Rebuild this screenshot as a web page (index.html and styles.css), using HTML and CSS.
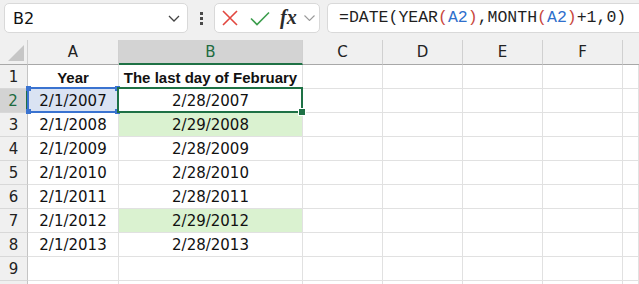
FILE: index.html
```html
<!DOCTYPE html>
<html lang="en">
<head>
    <meta charset="UTF-8">
    <title>Last day of February</title>
    <link rel="stylesheet" href="styles.css">
</head>
<body>
    <div class="toolbar">
        <div class="name-box">
            <span>B2</span>
            <svg class="chev" width="12" height="7" viewBox="0 0 12 7"><path d="M1 1l5 5 5-5" fill="none" stroke="#444" stroke-width="1.3"/></svg>
        </div>
        <div class="dots"><i></i><i></i><i></i></div>
        <div class="fx-box">
            <svg width="16" height="16" viewBox="0 0 16 16"><path d="M1 1l14 14M15 1L1 15" stroke="#e2473f" stroke-width="1.6"/></svg>
            <svg width="20" height="15" viewBox="0 0 20 15"><path d="M1 7.5l6 6L19 1.5" fill="none" stroke="#3d9e4e" stroke-width="1.6"/></svg>
            <span class="fx">fx</span>
            <svg width="11" height="6" viewBox="0 0 11 6"><path d="M0.5 0.5l5 5 5-5" fill="none" stroke="#9a9a9a" stroke-width="1.1"/></svg>
        </div>
        <div class="formula">=DATE(YEAR<span class="p">(</span><span class="r">A2</span><span class="p">)</span>,MONTH<span class="p">(</span><span class="r">A2</span><span class="p">)</span>+1,0)</div>
    </div>

    <div class="sheet">
        <div class="hd corner"><span class="tri"></span></div>
        <div class="hd col">A</div>
        <div class="hd col on">B</div>
        <div class="hd col">C</div>
        <div class="hd col">D</div>
        <div class="hd col">E</div>
        <div class="hd col">F</div>
        <div class="hd col last"></div>

        <div class="hd row">1</div>
        <div class="c bold">Year</div>
        <div class="c bold">The last day of February</div>
        <div class="c"></div><div class="c"></div><div class="c"></div><div class="c"></div><div class="c"></div>

        <div class="hd row on">2</div>
        <div class="c ref">2/1/2007
            <span class="range"><b class="k1"></b><b class="k2"></b><b class="k3"></b><b class="k4"></b></span>
        </div>
        <div class="c active">2/28/2007<span class="sel"><b class="handle"></b></span></div>
        <div class="c"></div><div class="c"></div><div class="c"></div><div class="c"></div><div class="c"></div>

        <div class="hd row">3</div>
        <div class="c">2/1/2008</div>
        <div class="c leap">2/29/2008</div>
        <div class="c"></div><div class="c"></div><div class="c"></div><div class="c"></div><div class="c"></div>

        <div class="hd row">4</div>
        <div class="c">2/1/2009</div>
        <div class="c">2/28/2009</div>
        <div class="c"></div><div class="c"></div><div class="c"></div><div class="c"></div><div class="c"></div>

        <div class="hd row">5</div>
        <div class="c">2/1/2010</div>
        <div class="c">2/28/2010</div>
        <div class="c"></div><div class="c"></div><div class="c"></div><div class="c"></div><div class="c"></div>

        <div class="hd row">6</div>
        <div class="c">2/1/2011</div>
        <div class="c">2/28/2011</div>
        <div class="c"></div><div class="c"></div><div class="c"></div><div class="c"></div><div class="c"></div>

        <div class="hd row">7</div>
        <div class="c">2/1/2012</div>
        <div class="c leap">2/29/2012</div>
        <div class="c"></div><div class="c"></div><div class="c"></div><div class="c"></div><div class="c"></div>

        <div class="hd row">8</div>
        <div class="c">2/1/2013</div>
        <div class="c">2/28/2013</div>
        <div class="c"></div><div class="c"></div><div class="c"></div><div class="c"></div><div class="c"></div>

        <div class="hd row">9</div>
        <div class="c"></div><div class="c"></div>
        <div class="c"></div><div class="c"></div><div class="c"></div><div class="c"></div><div class="c"></div>

        <div class="hd row"></div>
        <div class="c"></div><div class="c"></div>
        <div class="c"></div><div class="c"></div><div class="c"></div><div class="c"></div><div class="c"></div>
    </div>
</body>
</html>
```

FILE: styles.css
```css
body {
    margin: 0px;
    padding: 0px;
    width: 639px;
    height: 284px;
    overflow: hidden;
    background-color: #f0f0f0;
    font-family: "DejaVu Sans", sans-serif;
    color: #1f1f1f;
}
.toolbar {
    height: 40px;
    box-sizing: border-box;
    padding: 3px 0px 0px 4px;
    display: flex;
    align-items: flex-start;
}
.name-box {
    width: 184px;
    height: 30px;
    box-sizing: border-box;
    background-color: #ffffff;
    border: 1px solid #d9d9d9;
    border-radius: 5px;
    display: flex;
    align-items: center;
    justify-content: space-between;
    padding: 0px 7px 0px 8px;
    font-size: 16px;
    color: #111;
}
.dots {
    width: 26px;
    height: 30px;
    display: flex;
    flex-direction: column;
    align-items: center;
    justify-content: center;
    gap: 2px;
}
.dots i {
    display: block;
    width: 3px;
    height: 3px;
    background-color: #4a4a4a;
}
.fx-box {
    width: 106px;
    height: 30px;
    box-sizing: border-box;
    background-color: #ffffff;
    border: 1px solid #d9d9d9;
    border-radius: 5px;
    display: flex;
    align-items: center;
    padding-left: 7px;
}
.fx-box svg:nth-child(1) {
    margin-right: 12px;
}
.fx-box svg:nth-child(2) {
    margin-right: 10px;
}
.fx {
    font-family: "Liberation Serif", serif;
    font-style: italic;
    font-weight: 700;
    font-size: 20px;
    color: #2b2b2b;
    margin-right: 7px;
    margin-top: -2px;
}
.formula {
    flex: 1;
    height: 30px;
    box-sizing: border-box;
    margin-left: 7px;
    background-color: #ffffff;
    border: 1px solid #d9d9d9;
    border-right: none;
    border-radius: 5px 0px 0px 5px;
    padding-left: 11px;
    font-family: "Liberation Mono", monospace;
    font-size: 16.5px;
    line-height: 28px;
    color: #1f1f1f;
    white-space: nowrap;
    overflow: hidden;
}
.formula .p {
    color: #c9463d;
}
.formula .r {
    color: #2f6fcc;
}
.sheet {
    display: grid;
    grid-template-columns: 28px 91px 184px 80px 80px 80px 80px 1fr;
    grid-template-rows: 25px repeat(10, 24px);
}
.hd {
    box-sizing: border-box;
    background-color: #f0f0f0;
    display: flex;
    align-items: center;
    justify-content: center;
    font-size: 15px;
    color: #222;
}
.col {
    border-right: 1px solid #d0d0d0;
    border-bottom: 1px solid #a8a8a8;
}
.col.last {
    border-right: none;
}
.col.on {
    background-color: #d3d3d3;
    border-bottom: 2px solid #1e7145;
    color: #1e6b40;
}
.corner {
    border-right: 1px solid #d0d0d0;
    border-bottom: 1px solid #a8a8a8;
    position: relative;
}
.tri {
    position: absolute;
    left: 8px;
    top: 5px;
    width: 16px;
    height: 16px;
    background-color: #c6c6c6;
    clip-path: polygon(100% 0, 100% 100%, 0 100%);
}
.row {
    border-right: 1px solid #c4c4c4;
    border-bottom: 1px solid #d8d8d8;
    padding-top: 1px;
}
.row.on {
    background-color: #d3d3d3;
    border-right: 2px solid #1e7145;
    color: #1e6b40;
}
.c {
    box-sizing: border-box;
    background-color: #ffffff;
    border-right: 1px solid #e1e1e1;
    border-bottom: 1px solid #e1e1e1;
    display: flex;
    align-items: center;
    justify-content: center;
    font-size: 15px;
    color: #111;
    padding-top: 1px;
    white-space: nowrap;
}
.bold {
    font-family: "Liberation Sans", sans-serif;
    font-weight: 700;
}
.leap {
    background-color: #daf2d0;
}
.ref {
    background-color: #dae3f3;
    position: relative;
}
.active {
    position: relative;
}
.range {
    position: absolute;
    left: -1px;
    top: -2px;
    right: -1px;
    bottom: -1px;
    border: 2px solid #3a73d0;
    pointer-events: none;
}
.range b {
    position: absolute;
    width: 5px;
    height: 5px;
    background-color: #3a73d0;
}
.range .k1 { left: -3px; top: -3px; }
.range .k2 { right: -3px; top: -3px; }
.range .k3 { left: -3px; bottom: -3px; }
.range .k4 { right: -3px; bottom: -3px; }
.sel {
    position: absolute;
    left: -2px;
    top: -2px;
    right: -1px;
    bottom: -1px;
    border: 2px solid #1e7145;
    z-index: 2;
}
.handle {
    position: absolute;
    right: -5px;
    bottom: -5px;
    width: 6px;
    height: 6px;
    background-color: #1e7145;
    border: 1px solid #ffffff;
}
```
